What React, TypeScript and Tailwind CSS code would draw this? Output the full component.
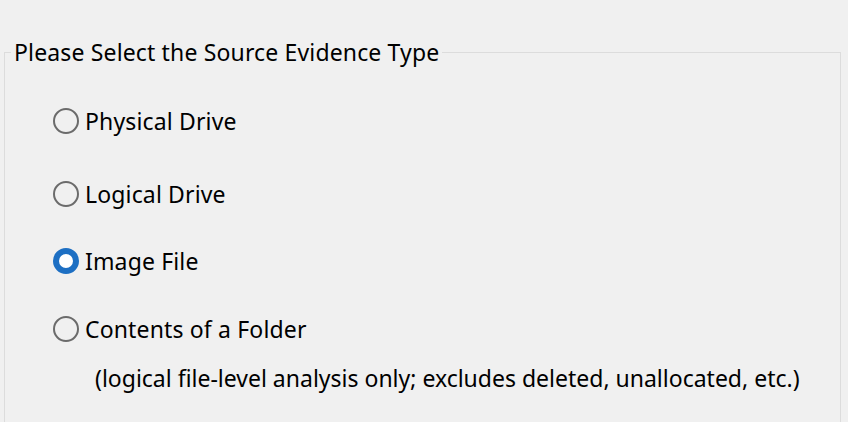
import React, { useState } from "react";

const options = [
  { id: "physical", label: "Physical Drive", mt: "mt-[40px]" },
  { id: "logical", label: "Logical Drive", mt: "mt-[45px]" },
  { id: "image", label: "Image File", mt: "mt-[39px]" },
  { id: "folder", label: "Contents of a Folder", mt: "mt-[40px]" },
];

export default function App() {
  const [selected, setSelected] = useState<string>("image");

  return (
    <div className="w-[848px] h-[422px] overflow-hidden bg-[#f0f0f0] text-black font-['Noto_Sans',sans-serif] tracking-[0.15px]">
      <fieldset className="ml-[4px] mt-[37px] w-[837px] h-[420px] border border-[#dcdcdc] px-0 pt-0 m-0">
        <legend className="ml-[6px] px-[3px] text-[23px] leading-[30px]">
          Please Select the Source Evidence Type
        </legend>
        <div className="flex flex-col pl-[48px]">
          {options.map((o) => (
            <div key={o.id} className={o.mt}>
              <label
                className="flex items-center gap-[6px] text-[23px] leading-[28px] cursor-default"
                onClick={() => setSelected(o.id)}
              >
                {selected === o.id ? (
                  <span className="w-[26px] h-[26px] rounded-full border-[6px] border-[#1d6fc3] bg-white shrink-0" />
                ) : (
                  <span className="w-[26px] h-[26px] rounded-full border-2 border-[#6b6b6b] bg-transparent shrink-0" />
                )}
                {o.label}
              </label>
              {o.id === "folder" && (
                <div className="pl-[42px] mt-[21px] text-[23px] leading-[28px] tracking-[0px]">
                  (logical file-level analysis only; excludes deleted, unallocated, etc.)
                </div>
              )}
            </div>
          ))}
        </div>
      </fieldset>
    </div>
  );
}
